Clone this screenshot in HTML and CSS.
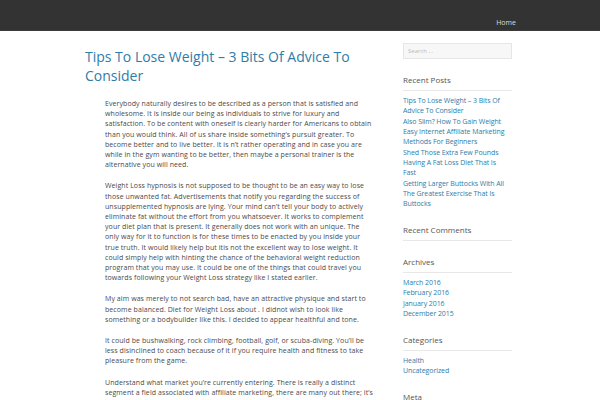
FILE: index.html
```html
<!DOCTYPE html>
<html>
<head>
<meta charset="utf-8">
<link rel="stylesheet" href="styles.css">
</head>
<body>
<header class="topbar">
  <nav class="nav"><a class="nav-link" href="#">Home</a></nav>
</header>
<div class="wrap">
  <main class="main">
    <h1 class="title">Tips To Lose Weight – 3 Bits Of Advice To Consider</h1>
    <div class="entry">
      <p>Everybody naturally desires to be described as a person that is satisfied and wholesome. It is inside our being as individuals to strive for luxury and satisfaction. To be content with oneself is clearly harder for Americans to obtain than you would think. All of us share inside something’s pursuit greater. To become better and to live better. It is n’t rather operating and in case you are while in the gym wanting to be better, then maybe a personal trainer is the alternative you will need.</p>
      <p>Weight Loss hypnosis is not supposed to be thought to be an easy way to lose those unwanted fat. Advertisements that notify you regarding the success of unsupplemented hypnosis are lying. Your mind can’t tell your body to actively eliminate fat without the effort from you whatsoever. It works to complement your diet plan that is present. It generally does not work with an unique. The only way for it to function is for these times to be enacted by you inside your true truth. It would likely help but itis not the excellent way to lose weight. It could simply help with hinting the chance of the behavioral weight reduction program that you may use. It could be one of the things that could travel you towards following your Weight Loss strategy like I stated earlier.</p>
      <p>My aim was merely to not search bad, have an attractive physique and start to become balanced. Diet for Weight Loss about . I didnot wish to look like something or a bodybuilder like this. I decided to appear healthful and tone.</p>
      <p>It could be bushwalking, rock climbing, football, golf, or scuba-diving. You’ll be less disinclined to coach because of it if you require health and fitness to take pleasure from the game.</p>
      <p>Understand what market you’re currently entering. There is really a distinct segment a field associated with affiliate marketing, there are many out there; it’s vital that you understand your market and the kind of product you are selling.</p>
    </div>
  </main>
  <aside class="sidebar">
    <div class="search">Search …</div>
    <section class="widget">
      <h2 class="widget-title">Recent Posts</h2>
      <ul class="links">
        <li><a href="#">Tips To Lose Weight – 3 Bits Of Advice To Consider</a></li>
        <li><a href="#">Also Slim? How To Gain Weight</a></li>
        <li><a href="#">Easy Internet Affiliate Marketing Methods For Beginners</a></li>
        <li><a href="#">Shed Those Extra Few Pounds</a></li>
        <li><a href="#">Having A Fat Loss Diet That Is Fast</a></li>
        <li><a href="#">Getting Larger Buttocks With All The Greatest Exercise That Is Buttocks</a></li>
      </ul>
    </section>
    <section class="widget">
      <h2 class="widget-title">Recent Comments</h2>
    </section>
    <section class="widget">
      <h2 class="widget-title">Archives</h2>
      <ul class="links">
        <li><a href="#">March 2016</a></li>
        <li><a href="#">February 2016</a></li>
        <li><a href="#">January 2016</a></li>
        <li><a href="#">December 2015</a></li>
      </ul>
    </section>
    <section class="widget">
      <h2 class="widget-title">Categories</h2>
      <ul class="links">
        <li><a href="#">Health</a></li>
        <li><a href="#">Uncategorized</a></li>
      </ul>
    </section>
    <section class="widget">
      <h2 class="widget-title">Meta</h2>
    </section>
  </aside>
</div>
</body>
</html>
```
FILE: styles.css
```css
html, body { margin: 0; padding: 0; }
body {
  font-family: "Open Sans", "Noto Sans", sans-serif;
  color: #4a4a4a;
  background: #fff;
  overflow: hidden;
  height: 400px;
}
a { text-decoration: none; color: #2e7da8; }
.topbar {
  height: 31px;
  background: #333;
  border-bottom: 1px solid #3b3b3b;
  box-sizing: border-box;
  display: flex;
  justify-content: flex-end;
  align-items: center;
  padding-right: 84px;
}
.nav { padding-top: 7px; }
.nav-link { color: #ddd; font-size: 7px; }
.wrap {
  display: flex;
  margin-left: 85px;
  width: 427px;
  gap: 18px;
}
.main { width: 300px; flex: none; }
.title {
  font-weight: 400;
  font-size: 14px;
  line-height: 19px;
  color: #2e7da8;
  margin: 16px 0 14px;
}
.entry { padding-left: 20px; width: 268px; }
.entry p {
  font-size: 7px;
  line-height: 10.2px;
  letter-spacing: 0.08px;
  margin: 0 0 11px;
}
.sidebar { width: 109px; flex: none; padding-top: 12px; }
.search {
  height: 16px;
  border: 1px solid #e6e6e6;
  background: #f7f7f7;
  font-size: 6px;
  color: #bbb;
  box-sizing: border-box;
  padding: 3px 4px;
  line-height: 9px;
}
.widget { margin-top: 15px; }
.widget + .widget { margin-top: 14.5px; }
.widget-title {
  font-weight: 400;
  font-size: 8px;
  line-height: 12px;
  color: #555;
  margin: 0 0 4.8px;
  padding-bottom: 4.4px;
  border-bottom: 1px solid #e8e8e8;
}
.links { list-style: none; margin: 0; padding: 0; width: 106px; }
.links li { font-size: 7px; line-height: 10.3px; letter-spacing: -0.08px; }
```
